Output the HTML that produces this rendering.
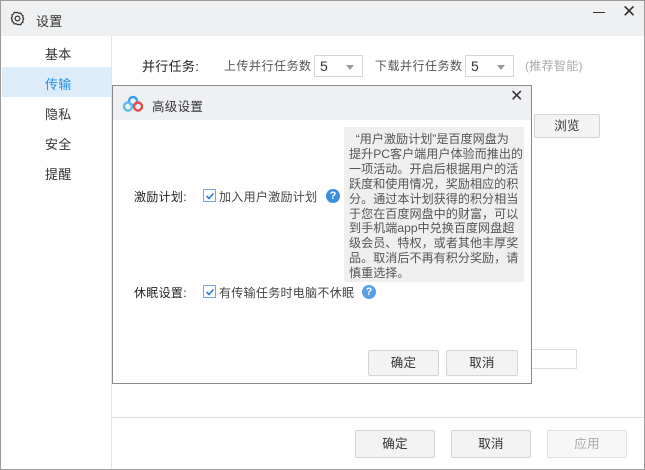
<!DOCTYPE html>
<html><head><meta charset="utf-8"><style>
*{margin:0;padding:0;box-sizing:border-box}
body{width:645px;height:470px;overflow:hidden;background:#fff;font-family:"Liberation Sans","Noto Sans CJK SC",sans-serif;font-size:12px;letter-spacing:.3px;color:#333;position:relative}
.a{position:absolute;white-space:nowrap}
.btn{position:absolute;border:1px solid #d4d4d4;background:#f3f3f3;border-radius:2px;text-align:center;font-size:12.5px;color:#333}
.sel{position:absolute;border:1px solid #d6d6d6;background:#fff;height:22px;width:48px;font-size:14px;padding-left:5px;line-height:20px}
.sel:after{content:"";position:absolute;right:8px;top:9px;border:4px solid transparent;border-top:5px solid #999}
.cb{position:absolute;width:13px;height:13px;border:1px solid #7aa7d6;background:#fff}
.cb svg{position:absolute;left:1px;top:1px}
.q{position:absolute;width:14px;height:14px;border-radius:50%;background:#3b8de0;color:#fff;font-size:11px;font-weight:bold;text-align:center;line-height:14px;letter-spacing:0}
</style></head><body>
<div class="a" style="left:0;top:0;width:645px;height:470px;border:1px solid #9a9a9a"></div>
<div class="a" style="left:1px;top:1px;width:643px;height:35px;background:#eff0f2"></div>
<svg class="a" style="left:10px;top:11px" width="15" height="15" viewBox="0 0 16 16"><path d="M8 1.5l1.6 1 1.9-.3.7 1.8 1.7.9-.3 1.9 1 1.6-1 1.6.3 1.9-1.7.9-.7 1.8-1.9-.3L8 14.5l-1.6-1-1.9.3-.7-1.8-1.7-.9.3-1.9-1-1.6 1-1.6-.3-1.9 1.7-.9.7-1.8 1.9.3z" fill="none" stroke="#333" stroke-width="1.3"/><circle cx="8" cy="8" r="2.5" fill="none" stroke="#333" stroke-width="1.3"/></svg>
<div class="a" style="left:36px;top:11px;font-size:13px">设置</div>
<div class="a" style="left:593px;top:12px;width:12px;height:1px;background:#333"></div>
<div class="a" style="left:622px;top:2px;font-size:17px;color:#333">✕</div>
<div class="a" style="left:111px;top:36px;width:1px;height:433px;background:#e3e3e3"></div>
<div class="a" style="left:45px;top:44px;font-size:13px">基本</div>
<div class="a" style="left:2px;top:67px;width:109px;height:30px;background:#dcedf9"></div>
<div class="a" style="left:45px;top:74px;color:#2a8ee0;font-size:13px">传输</div>
<div class="a" style="left:45px;top:104px;font-size:13px">隐私</div>
<div class="a" style="left:45px;top:134px;font-size:13px">安全</div>
<div class="a" style="left:45px;top:164px;font-size:13px">提醒</div>
<div class="a" style="left:142px;top:56px;color:#222;font-size:13px">并行任务:</div>
<div class="a" style="left:224px;top:57px;color:#555;letter-spacing:.5px">上传并行任务数</div>
<div class="sel" style="left:314px;top:55px;width:49px">5</div>
<div class="a" style="left:375px;top:57px;color:#555;letter-spacing:.5px">下载并行任务数</div>
<div class="sel" style="left:465px;top:55px;width:49px">5</div>
<div class="a" style="left:525px;top:57px;color:#aaa">(推荐智能)</div>
<div class="btn" style="left:534px;top:114px;width:66px;height:24px;line-height:22px">浏览</div>
<div class="a" style="left:531px;top:349px;width:46px;height:20px;border:1px solid #ddd;border-left:none"></div>
<div class="a" style="left:112px;top:417px;width:532px;height:1px;background:#ddd"></div>
<div class="btn" style="left:355px;top:430px;width:80px;height:28px;line-height:26px">确定</div>
<div class="btn" style="left:451px;top:430px;width:80px;height:28px;line-height:26px">取消</div>
<div class="btn" style="left:547px;top:430px;width:80px;height:28px;line-height:26px;background:#f7f7f7;border-color:#e2e2e2;color:#aaa">应用</div>
<!-- dialog -->
<div class="a" style="left:112px;top:85px;width:420px;height:299px;background:#fff;border:1px solid #8a8a8a"></div>
<div class="a" style="left:113px;top:86px;width:418px;height:34px;background:#eef0f3"></div>
<svg class="a" style="left:122px;top:95px" width="22" height="17" viewBox="0 0 22 17"><circle cx="11" cy="6" r="4" fill="none" stroke="#3aa0e8" stroke-width="2.4"/><circle cx="6" cy="11.5" r="4" fill="none" stroke="#5bbcf0" stroke-width="2.4"/><circle cx="16" cy="11.5" r="4" fill="none" stroke="#e64b4b" stroke-width="2.4"/></svg>
<div class="a" style="left:152px;top:96px;color:#333;font-size:12.5px">高级设置</div>
<div class="a" style="left:510px;top:86px;font-size:16px;color:#333">✕</div>
<div class="a" style="left:344px;top:127px;width:180px;height:155px;background:#efefef"></div>
<div class="a" style="left:349px;top:132px;font-size:12.1px;letter-spacing:0;line-height:14.9px;color:#555">&nbsp;&nbsp;“用户激励计划”是百度网盘为<br>提升PC客户端用户体验而推出的<br>一项活动。开启后根据用户的活<br>跃度和使用情况，奖励相应的积<br>分。通过本计划获得的积分相当<br>于您在百度网盘中的财富，可以<br>到手机端app中兑换百度网盘超<br>级会员、特权，或者其他丰厚奖<br>品。取消后不再有积分奖励，请<br>慎重选择。</div>
<div class="a" style="left:134px;top:188px;color:#222">激励计划:</div>
<div class="cb" style="left:203px;top:189px"><svg width="10" height="10" viewBox="0 0 10 10"><path d="M1.5 5l2.5 2.5 4.5-5" fill="none" stroke="#2a7fd0" stroke-width="1.6"/></svg></div>
<div class="a" style="left:219px;top:188px;color:#444">加入用户激励计划</div>
<div class="q" style="left:326px;top:189px">?</div>
<div class="a" style="left:134px;top:284px;color:#222">休眠设置:</div>
<div class="cb" style="left:203px;top:285px"><svg width="10" height="10" viewBox="0 0 10 10"><path d="M1.5 5l2.5 2.5 4.5-5" fill="none" stroke="#2a7fd0" stroke-width="1.6"/></svg></div>
<div class="a" style="left:219px;top:284px;color:#444">有传输任务时电脑不休眠</div>
<div class="q" style="left:362px;top:285px;background:#5a9ee8">?</div>
<div class="btn" style="left:368px;top:350px;width:71px;height:26px;line-height:24px">确定</div>
<div class="btn" style="left:446px;top:350px;width:72px;height:26px;line-height:24px">取消</div>
</body></html>
